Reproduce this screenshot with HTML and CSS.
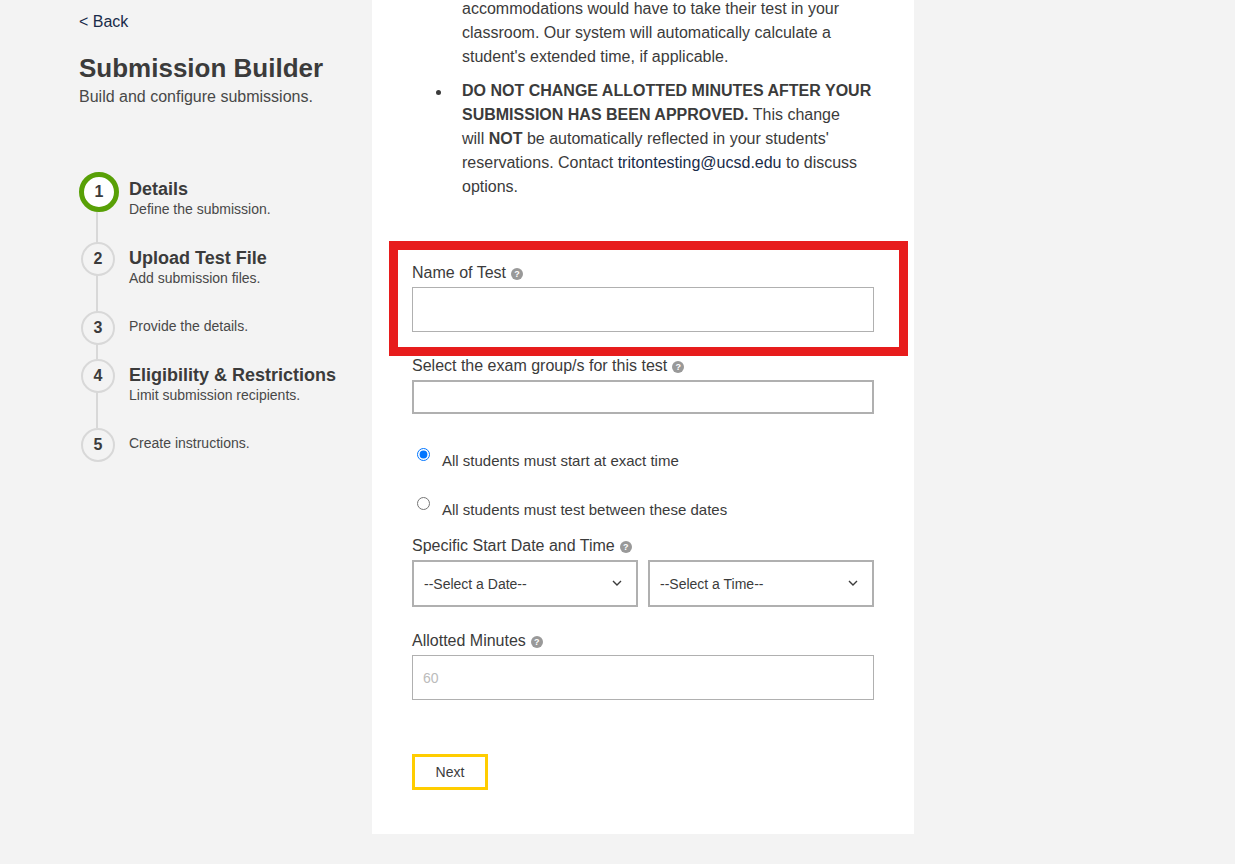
FILE: index.html
```html
<!DOCTYPE html>
<html lang="en">
<head>
<meta charset="utf-8">
<meta name="viewport" content="width=device-width, initial-scale=1">
<title>Submission Builder</title>
<link rel="stylesheet" href="styles.css">
</head>
<body>
<div class="page">
  <aside class="sidebar">
    <a class="back" href="#">&lt; Back</a>
    <h1 class="title">Submission Builder</h1>
    <p class="subtitle">Build and configure submissions.</p>
    <ol class="steps">
      <li class="step step-active">
        <span class="step-number">1</span>
        <div class="step-text"><h2 class="step-title">Details</h2><p class="step-desc">Define the submission.</p></div>
      </li>
      <li class="step">
        <span class="step-number">2</span>
        <div class="step-text"><h2 class="step-title">Upload Test File</h2><p class="step-desc">Add submission files.</p></div>
      </li>
      <li class="step">
        <span class="step-number">3</span>
        <div class="step-text"><p class="step-desc">Provide the details.</p></div>
      </li>
      <li class="step">
        <span class="step-number">4</span>
        <div class="step-text"><h2 class="step-title">Eligibility &amp; Restrictions</h2><p class="step-desc">Limit submission recipients.</p></div>
      </li>
      <li class="step">
        <span class="step-number">5</span>
        <div class="step-text"><p class="step-desc">Create instructions.</p></div>
      </li>
    </ol>
  </aside>

  <main class="panel">
    <ul class="notes">
      <li class="note note-continued">accommodations would have to take their test in your classroom. Our system will automatically calculate a student's extended time, if applicable.</li>
      <li class="note"><strong>DO NOT CHANGE ALLOTTED MINUTES AFTER YOUR SUBMISSION HAS BEEN APPROVED.</strong> This change will&nbsp;<strong>NOT</strong> be automatically reflected in your students' reservations. Contact <a class="note-link" href="mailto:tritontesting@ucsd.edu">tritontesting@ucsd.edu</a> to discuss options.</li>
    </ul>

    <form class="form">
      <div class="field field-highlighted">
        <div class="label-row"><label for="name">Name of Test</label><button class="help" type="button" aria-label="Help: name of test">?</button></div>
        <input class="input" id="name" type="text">
      </div>

      <div class="field">
        <div class="label-row"><label for="groups">Select the exam group/s for this test</label><button class="help" type="button" aria-label="Help: exam groups">?</button></div>
        <input class="input input-groups" id="groups" type="text">
      </div>

      <div class="options">
        <div class="option"><input class="radio" type="radio" name="timing" id="exact" checked><label for="exact">All students must start at exact time</label></div>
        <div class="option"><input class="radio" type="radio" name="timing" id="between"><label for="between">All students must test between these dates</label></div>
      </div>

      <div class="field">
        <div class="label-row"><label for="date">Specific Start Date and Time</label><button class="help" type="button" aria-label="Help: start date and time">?</button></div>
        <div class="selects">
          <div class="select-box">
            <select class="select" id="date"><option>--Select a Date--</option></select>
            <svg class="chevron" viewBox="0 0 10 6" aria-hidden="true"><path d="M1 1l4 4 4-4"/></svg>
          </div>
          <div class="select-box">
            <select class="select" id="time" aria-label="Start time"><option>--Select a Time--</option></select>
            <svg class="chevron" viewBox="0 0 10 6" aria-hidden="true"><path d="M1 1l4 4 4-4"/></svg>
          </div>
        </div>
      </div>

      <div class="field">
        <div class="label-row"><label for="minutes">Allotted Minutes</label><button class="help" type="button" aria-label="Help: allotted minutes">?</button></div>
        <input class="input" id="minutes" type="text" placeholder="60">
      </div>

      <button class="next" type="submit">Next</button>
    </form>
  </main>
</div>
</body>
</html>
```
FILE: styles.css
```css
* { box-sizing: border-box; }

body {
  margin: 0;
  background: #f3f3f3;
  color: #3b3b3b;
  font: 16px/24px "Liberation Sans", Arial, sans-serif;
}

h1, h2, p, ul, ol { margin: 0; padding: 0; }
ul, ol { list-style: none; }

.page {
  display: grid;
  grid-template-columns: 293fr 542fr 242fr;
  align-items: start;
  padding: 0 79px 30px;
}

.sidebar { padding-top: 10px; }
.back { display: block; color: #182b49; text-decoration: none; }
.title { margin-top: 18px; font-size: 26px; line-height: 33px; white-space: nowrap; }
.subtitle { color: #484848; }

/* Progress steps */
.steps { margin-top: 63px; }
.step {
  position: relative;
  display: grid;
  grid-template-columns: 40px 1fr;
  column-gap: 10px;
  align-items: start;
  min-height: 48px;
}
.step:not(:last-child)::before {
  content: "";
  position: absolute;
  top: 0;
  bottom: 0;
  left: 17px;
  width: 2px;
  background: #d8d8d8;
}
.step-number {
  position: relative;
  display: flex;
  align-items: center;
  justify-content: center;
  width: 34px;
  height: 34px;
  margin-left: 2px;
  border: 2px solid #d8d8d8;
  border-radius: 50%;
  background: #f3f3f3;
  font-weight: bold;
}
.step-active .step-number {
  width: 40px;
  height: 40px;
  margin-left: 0;
  border: 5px solid #58a006;
  background: #fff;
}
.step-text { padding: 5px 0 23px; }
.step-active .step-text { padding-top: 6px; }
.step-title { font-size: 18px; line-height: 22px; white-space: nowrap; }
.step-desc { color: #484848; font-size: 14px; line-height: 19px; }
.step-desc:only-child { line-height: 20px; }

/* Form panel */
.panel { padding: 0 40px 44px; background: #fff; }
.notes { display: grid; gap: 10px; margin-top: -3px; padding-left: 50px; }
.note { position: relative; }
.note:not(.note-continued)::before {
  content: "";
  position: absolute;
  top: 11px;
  left: -26px;
  width: 5px;
  height: 5px;
  border-radius: 50%;
  background: #3b3b3b;
}
.note-link { color: #182b49; text-decoration: none; }

.form { margin-top: 62px; }
.field { position: relative; margin-top: 22px; }
.field-highlighted::after {
  content: "";
  position: absolute;
  inset: -20px -34px -24px -23px;
  border: 9px solid #e71c1c;
  pointer-events: none;
}
.label-row { display: flex; align-items: center; gap: 5px; margin-bottom: 2px; }
.help {
  width: 12px;
  height: 12px;
  margin-top: 2px;
  padding: 0;
  border: 0;
  border-radius: 50%;
  background: #999;
  color: #fff;
  font: bold 9px/12px "Liberation Sans", Arial, sans-serif;
  text-align: center;
}

.input {
  display: block;
  width: 100%;
  height: 45px;
  padding: 0 10px;
  border: 1px solid #b0b0b0;
  border-radius: 0;
  background: #fff;
  color: #3b3b3b;
  font: 14px "Liberation Sans", Arial, sans-serif;
}
.input::placeholder { color: #bbb; opacity: 1; }
.input-groups { height: 34px; border-width: 2px; }

.options { display: grid; gap: 24px; margin-top: 34px; font-size: 15px; }
.option { display: flex; align-items: flex-start; gap: 12px; padding-left: 5px; }
.option label { padding-top: 1px; }
.radio { width: 13px; height: 13px; margin: 0; }
.options + .field { margin-top: 12px; }

.selects { display: grid; grid-template-columns: 1fr 1fr; gap: 10px; }
.select-box { position: relative; }
.select {
  appearance: none;
  display: block;
  width: 100%;
  height: 47px;
  padding: 0 36px 0 10px;
  border: 2px solid #b0b0b0;
  border-radius: 0;
  background: #fff;
  color: #3b3b3b;
  font: 14px "Liberation Sans", Arial, sans-serif;
}
.chevron {
  position: absolute;
  top: 20px;
  right: 16px;
  width: 10px;
  height: 6px;
  fill: none;
  stroke: #3b3b3b;
  stroke-width: 1.4;
  pointer-events: none;
}

.next {
  display: block;
  min-width: 76px;
  height: 36px;
  margin-top: 54px;
  padding: 0 20px;
  border: 3px solid #ffcd00;
  background: #fff;
  color: #3b3b3b;
  font: 14px "Liberation Sans", Arial, sans-serif;
}
```
